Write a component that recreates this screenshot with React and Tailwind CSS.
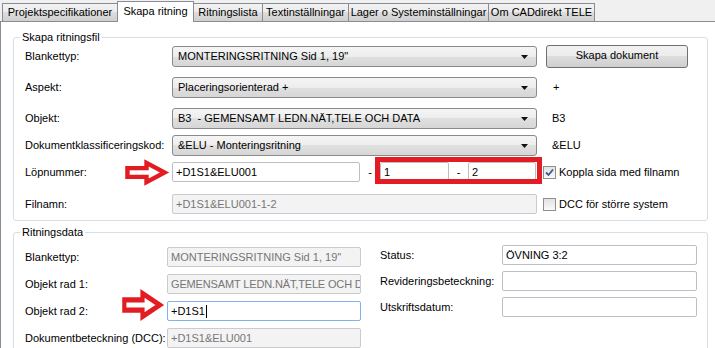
import React from 'react'

const tabs = [
  { label: 'Projektspecifikationer', w: 'w-[116px]' },
  { label: 'Skapa ritning', w: 'w-[77px]', active: true },
  { label: 'Ritningslista', w: 'w-[70px]' },
  { label: 'Textinställningar', w: 'w-[87px]' },
  { label: 'Lager o Systeminställningar', w: 'w-[141px]' },
  { label: 'Om CADdirekt TELE', w: 'w-[107px]' },
]

function Tab({ label, w, active }) {
  if (active) {
    return (
      <div className={`${w} relative z-10 -ml-px mb-[-1px] flex h-[21px] items-center justify-center border border-b-0 border-[#898c95] bg-white pb-[2px]`}>
        {label}
      </div>
    )
  }
  return (
    <div className={`${w} -ml-px flex h-[18px] items-center justify-center border border-b-0 border-[#898c95] bg-[linear-gradient(#f2f2f2,#ebebeb_50%,#dddddd_50%,#cfcfcf)]`}>
      {label}
    </div>
  )
}

function Select({ children }) {
  return (
    <div className="flex h-[21px] w-[365px] items-center justify-between rounded-[3px] border border-[#8a8a8a] bg-[linear-gradient(#f5f5f5,#ededed_50%,#e0e0e0_50%,#d6d6d6)] pl-[5px] pr-[8px]">
      <span className="whitespace-nowrap">{children}</span>
      <svg width="7" height="4" viewBox="0 0 7 4">
        <path d="M0 0H7L3.5 4Z" fill="#111" />
      </svg>
    </div>
  )
}

function Input({ w, children, disabled, focused, caret, tight }) {
  const look = disabled
    ? 'border-[#c9cbcf] bg-[#f3f3f3] text-[#767676]'
    : focused
      ? 'border-[#7eb4ea] bg-white'
      : 'border-[#bcbfc6] bg-white'
  return (
    <div className={`${w} ${look} ${tight ? 'tracking-[-0.15px]' : ''} flex h-[20px] items-center overflow-hidden whitespace-nowrap rounded-[2px] border px-[3px]`}>
      {children}
      {caret && <span className="ml-px inline-block h-[13px] w-px bg-black" />}
    </div>
  )
}

function Check({ checked }) {
  return (
    <div className="flex h-[13px] w-[13px] items-center justify-center border border-[#8f8f8f] bg-[linear-gradient(#e2e2e2,#fafafa)]">
      {checked && (
        <svg width="9" height="9" viewBox="0 0 9 9">
          <path d="M1 4.5L3.5 7L8 1.5" fill="none" stroke="#3b5791" strokeWidth="1.8" />
        </svg>
      )}
    </div>
  )
}

function Arrow({ className }) {
  return (
    <svg className={`absolute overflow-visible ${className}`} viewBox="0 0 44 26" preserveAspectRatio="none">
      <polygon
        points="2.5,8.5 22,8.5 22,3 40.5,13 22,23 22,17.5 2.5,17.5"
        fill="white"
        stroke="#e31b23"
        strokeWidth="4.5"
      />
    </svg>
  )
}

function Row({ label, className = '', children }) {
  return (
    <div className={`relative flex items-center pl-[11px] ${className}`}>
      <span className="w-[147px] whitespace-nowrap">{label}</span>
      {children}
    </div>
  )
}

function Group({ title, className, children }) {
  return (
    <div className={`relative ml-[12px] w-[695px] rounded-[3px] border border-[#d5dfe5] ${className}`}>
      <span className="absolute left-[6px] top-[-8px] bg-white px-[2px] leading-[14px]">{title}</span>
      {children}
    </div>
  )
}

export default function App() {
  return (
    <div className="h-[348px] w-[715px] overflow-hidden bg-[#f0f0f0] font-['Liberation_Sans',Arial,sans-serif] text-[11px] text-black">
      <div className="flex h-[21px] items-end pl-[3px]">
        {tabs.map((t) => (
          <Tab key={t.label} {...t} />
        ))}
      </div>

      <div className="h-[327px] overflow-hidden border-l border-t border-[#898c95] bg-white">
        <Group title="Skapa ritningsfil" className="mt-[15px] h-[184px]">
          <Row label="Blankettyp:" className="mt-[7px] h-[23px]">
            <Select>MONTERINGSRITNING Sid 1, 19"</Select>
            <button className="ml-[9px] h-[23px] w-[142px] rounded-[3px] border border-[#707070] bg-[linear-gradient(#f2f2f2,#ebebeb_50%,#dddddd_50%,#cfcfcf)] pb-[3px]">
              Skapa dokument
            </button>
          </Row>
          <Row label="Aspekt:" className="mt-[9px] h-[21px]">
            <Select>Placeringsorienterad +</Select>
            <span className="ml-[16px]">+</span>
          </Row>
          <Row label="Objekt:" className="mt-[10px] h-[21px]">
            <Select>B3&nbsp;&nbsp;- GEMENSAMT LEDN.NÄT,TELE OCH DATA</Select>
            <span className="ml-[15px]">B3</span>
          </Row>
          <Row label="Dokumentklassificeringskod:" className="mt-[6px] h-[21px]">
            <Select>&amp;ELU - Monteringsritning</Select>
            <span className="ml-[15px]">&amp;ELU</span>
          </Row>
          <Row label="Löpnummer:" className="mt-[6px] h-[20px]">
            <Input w="w-[188px]">+D1S1&amp;ELU001</Input>
            <span className="w-[20px] text-center">-</span>
            <Input w="w-[69px]">1</Input>
            <span className="w-[19px] text-center">-</span>
            <Input w="w-[68px]">2</Input>
            <div className="ml-[7px] flex items-center gap-[3px]">
              <Check checked />
              <span>Koppla sida med filnamn</span>
            </div>
            <div className="absolute left-[361px] top-[-5px] h-[27px] w-[167px] border-[5px] border-[#e31b23]" />
            <Arrow className="left-[111px] top-[-2px] h-[25px] w-[43px]" />
          </Row>
          <Row label="Filnamn:" className="mt-[12px] h-[20px]">
            <Input w="w-[365px]" disabled>+D1S1&amp;ELU001-1-2</Input>
            <div className="ml-[6px] flex items-center gap-[3px]">
              <Check />
              <span>DCC för större system</span>
            </div>
          </Row>
        </Group>

        <Group title="Ritningsdata" className="mt-[11px] h-[140px]">
          <div className="flex">
            <div className="mt-[14px] flex flex-col gap-[7px] pl-[11px]">
              {[
                ['Blankettyp:', 'MONTERINGSRITNING Sid 1, 19"', true],
                ['Objekt rad 1:', 'GEMENSAMT LEDN.NÄT,TELE OCH DATA', true],
                ['Objekt rad 2:', '+D1S1', false],
                ['Dokumentbeteckning (DCC):', '+D1S1&ELU001', true],
              ].map(([label, value, disabled]) => (
                <div key={label} className="relative flex h-[20px] items-center">
                  <span className="w-[142px] whitespace-nowrap">{label}</span>
                  <Input
                    w="w-[194px]"
                    disabled={disabled}
                    focused={!disabled}
                    caret={!disabled}
                    tight={label === 'Objekt rad 1:'}
                  >
                    {value}
                  </Input>
                  {!disabled && <Arrow className="left-[97px] top-[-11px] h-[30px] w-[41px]" />}
                </div>
              ))}
            </div>
            <div className="ml-[19px] mt-[12px] flex flex-col gap-[6px]">
              {[
                ['Status:', 'ÖVNING 3:2'],
                ['Revideringsbeteckning:', ''],
                ['Utskriftsdatum:', ''],
              ].map(([label, value]) => (
                <div key={label} className="flex h-[20px] items-center">
                  <span className="w-[122px] whitespace-nowrap">{label}</span>
                  <Input w="w-[195px]">{value}</Input>
                </div>
              ))}
            </div>
          </div>
        </Group>
      </div>
    </div>
  )
}
